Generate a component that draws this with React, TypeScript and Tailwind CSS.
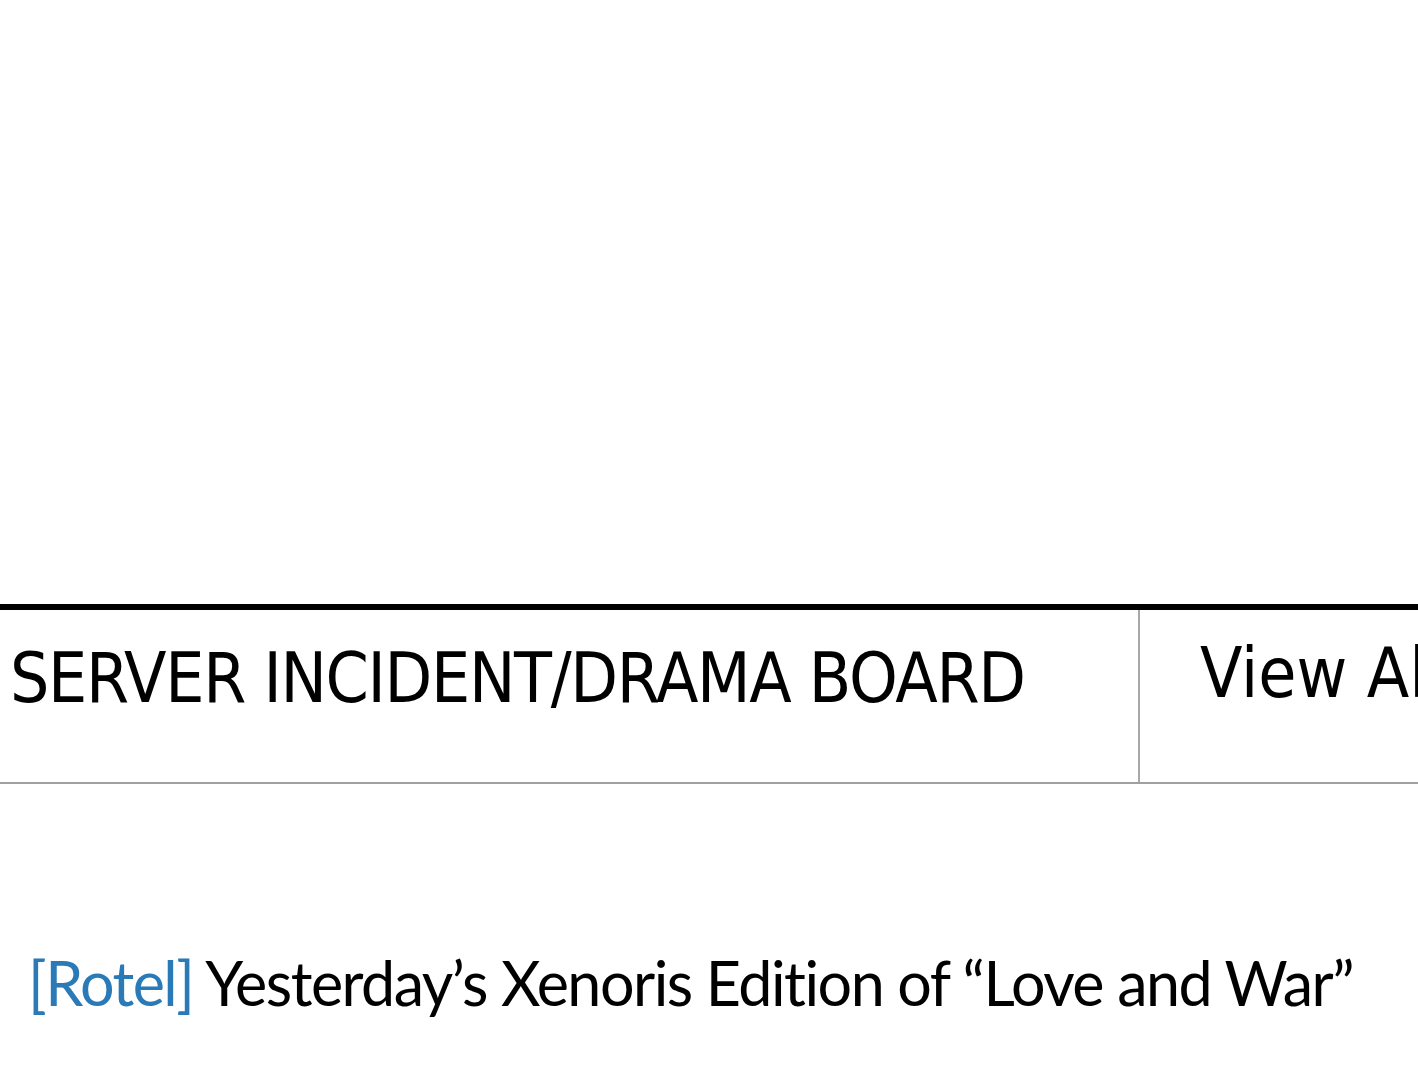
export default function App() {
  return (
    <div className="w-[1418px] h-[1080px] overflow-hidden bg-white text-black">
      <div className="h-[604px]" />

      {/* board header row */}
      <div
        className="flex w-[1600px] h-[180px] border-t-[6px] border-black border-b-2 border-b-[#a0a0a0]"
        style={{ fontFamily: '"DejaVu Sans Condensed", "DejaVu Sans", sans-serif' }}
      >
        <div className="w-[1140px] shrink-0 border-r-2 border-[#a8a8a8] pl-[10px] pt-[34px] text-[69px] leading-none tracking-[-1.3px] whitespace-nowrap">
          SERVER INCIDENT/DRAMA BOARD
        </div>
        <div className="pl-[60px] pt-[29px] text-[69px] leading-none whitespace-nowrap">
          View All
        </div>
      </div>

      {/* latest entry */}
      <div
        className="mt-[168px] pl-[28px] text-[61px] leading-none tracking-[-1.5px] whitespace-nowrap [font-variant-ligatures:none]"
        style={{ fontFamily: 'Lato, "DejaVu Sans Condensed", sans-serif' }}
      >
        <span className="text-[#2a7ab8]">[Rotel]</span> Yesterday&rsquo;s Xenoris Edition of &ldquo;Love and War&rdquo;
      </div>
    </div>
  );
}
